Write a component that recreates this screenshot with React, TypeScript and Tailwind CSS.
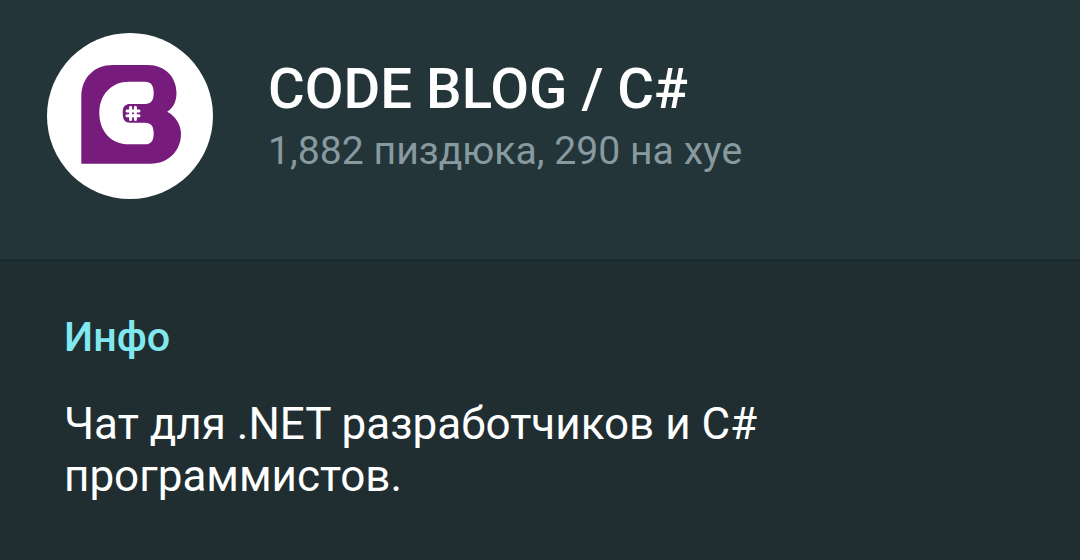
const Logo = () => (
  <svg viewBox="0 0 166 166" className="size-full" fill="none">
    <path
      fill="#771c7d"
      d="M34.3 130.7V64C34.3 45 47 32 66 32H101C118 32 129.5 44 129.5 60C129.5 68 126.5 75 120.2 78.7C128.5 83 134 91.5 134 101C134 118 121 130.7 104 130.7Z"
    />
    <path
      fill="#fff"
      d="M82 48.7H98C104 48.7 106.7 52.5 106.7 60C106.7 67.5 104 71 98 71H83.5C78 71 75.7 73.5 75.7 80.3C75.7 87 78 89.7 83.5 89.7H98C104 89.7 106.7 93 106.7 100.5C106.7 108 104 111.3 98 111.3H82C64 111.3 52.3 98 52.3 80C52.3 62 64 48.7 82 48.7Z"
    />
    <path
      stroke="#fff"
      strokeWidth="3"
      strokeLinecap="round"
      d="M83.6 74.2V86.4M88.4 74.2V86.4M80 78H92M80 82.8H92"
    />
  </svg>
);

const Header = () => (
  <header className="flex h-[262px] items-start gap-[55px] border-b-3 border-[#1b2b2e] bg-[#233539] pl-[47px] pt-[33px]">
    <div className="size-[166px] shrink-0 overflow-hidden rounded-full bg-white">
      <Logo />
    </div>
    <div className="pt-[23px] whitespace-nowrap">
      <h1 className="text-[56.3px] leading-[66px] font-medium text-white">
        CODE BLOG / C#
      </h1>
      <p className="mt-px text-[39.2px] leading-[56px] text-[#869a9f]">
        1,882 пиздюка, 290 на хуе
      </p>
    </div>
  </header>
);

const Info = () => (
  <section className="px-16 pt-[51px]">
    <h2 className="text-[41.3px] leading-[48px] font-medium text-[#80e8ee]">
      Инфо
    </h2>
    <p className="mt-[37px] text-[44px] leading-[52px] text-white">
      Чат для .NET разработчиков и C#
      <br />
      программистов.
    </p>
  </section>
);

const App = () => {
  return (
    <main className="h-[560px] w-full overflow-hidden bg-[#202e31] font-['Roboto',sans-serif]">
      <Header />
      <Info />
    </main>
  );
};

export default App;
